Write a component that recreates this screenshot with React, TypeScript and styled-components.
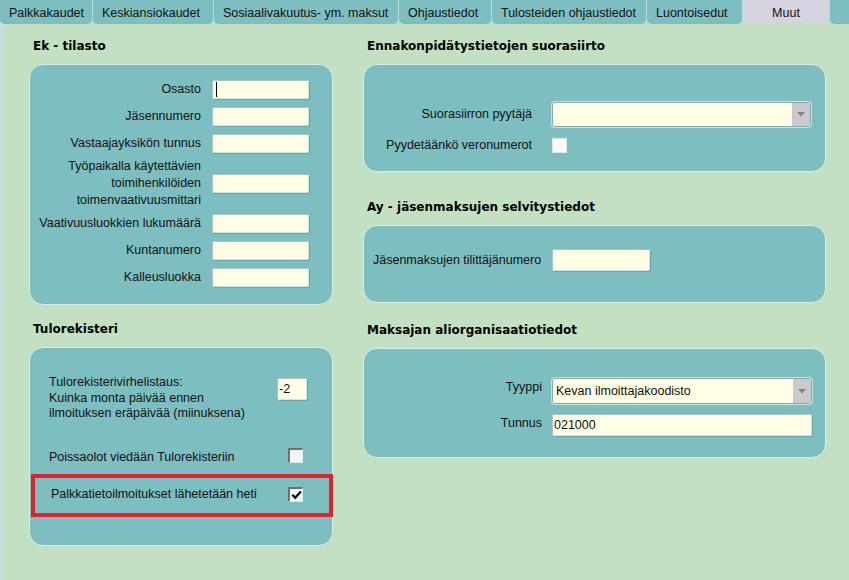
import { Fragment } from "react";
import styled, { createGlobalStyle, css } from "styled-components";

const GlobalStyle = createGlobalStyle`
  html, body {
    margin: 0;
    padding: 0;
  }

  body {
    width: 849px;
    height: 580px;
    overflow: hidden;
    background: #c9dfe2;
    font-family: "Liberation Sans", Arial, sans-serif;
    font-size: 12.5px;
    color: #111;
  }
`;

const Screen = styled.div`
  width: 849px;
  height: 580px;
  display: flex;
  flex-direction: column;
  background: #c9dfe2;
`;

const TabBar = styled.div`
  display: flex;
  gap: 1px;
  height: 24px;
  flex-shrink: 0;
  background: #b6dcd9;
`;

const Tab = styled.div<{ $w: number; $active?: boolean }>`
  box-sizing: border-box;
  width: ${(p) => p.$w}px;
  height: 24px;
  padding: 2px 0 0 9px;
  display: flex;
  align-items: center;
  line-height: 15px;
  white-space: nowrap;
  background: #7dbfc0;
  border-radius: 0 0 5px 5px;

  ${(p) =>
    p.$active &&
    css`
      padding-left: 0;
      justify-content: center;
      background: #d5d3de;
      border-radius: 0;
    `}
`;

const TabFiller = styled.div`
  flex: 1;
  background: #7dbfc0;
  border-radius: 0 0 0 5px;
`;

const Content = styled.div`
  flex: 1;
  margin-left: 3px;
  padding: 15px 0 0 26px;
  background: #c3e0c2;
  border-top-left-radius: 6px;
  display: grid;
  grid-template-columns: 304px 463px;
  column-gap: 30px;
  align-items: start;
`;

const Column = styled.div`
  display: flex;
  flex-direction: column;
`;

const SectionTitle = styled.div<{ $gap?: number }>`
  margin-top: ${(p) => p.$gap ?? 0}px;
  margin-bottom: 10px;
  padding-left: 4px;
  font-family: "DejaVu Sans", Verdana, sans-serif;
  font-weight: bold;
  font-size: 12px;
  line-height: 15px;
  color: #000;
`;

const Panel = styled.div<{ $pad: string }>`
  padding: ${(p) => p.$pad};
  background: #7dbfc0;
  border: 1px solid #d4efe7;
  border-radius: 14px;
`;

const FieldGrid = styled.div<{ $cols: string; $colGap: number; $rowGap: number }>`
  display: grid;
  grid-template-columns: ${(p) => p.$cols};
  column-gap: ${(p) => p.$colGap}px;
  row-gap: ${(p) => p.$rowGap}px;
  align-items: center;
`;

const Label = styled.div<{ $left?: boolean; $top?: boolean }>`
  line-height: 15px;
  white-space: nowrap;
  text-align: ${(p) => (p.$left ? "left" : "right")};

  ${(p) =>
    p.$top &&
    css`
      align-self: start;
      padding-top: 2px;
    `}
`;

const MultiLabel = styled(Label)`
  line-height: 17px;
  margin: -3px 0;
`;

const TextBox = styled.div<{ $w?: number; $h?: number }>`
  box-sizing: border-box;
  width: ${(p) => (p.$w ? `${p.$w}px` : "100%")};
  height: ${(p) => p.$h ?? 19}px;
  padding: 0 1px;
  display: flex;
  align-items: center;
  line-height: 15px;
  background: #fffee4;
  border: 1px solid #cfe6e0;
  border-top-color: #a9c7c2;
  border-left-color: #a9c7c2;
  border-radius: 2px;
  box-shadow: 1px 1px 0 rgba(70, 120, 120, 0.35);
`;

const Caret = styled.span`
  width: 1px;
  height: 15px;
  margin-left: 2px;
  background: #000;
`;

const Select = styled.div<{ $h: number }>`
  box-sizing: border-box;
  width: 100%;
  height: ${(p) => p.$h}px;
  display: flex;
  align-items: center;
  background: #fffee4;
  border: 1px solid #8ea8a7;
  border-radius: 3px;
  overflow: hidden;
  box-shadow: 0 0 0 1px #c7e3dd;
`;

const SelectValue = styled.div`
  flex: 1;
  padding-left: 3px;
  line-height: 15px;
`;

const SelectArrow = styled.div`
  width: 18px;
  align-self: stretch;
  display: flex;
  align-items: center;
  justify-content: center;
  background: #c9cacd;
`;

const CheckBox = styled.div<{ $sunken?: boolean }>`
  box-sizing: border-box;
  width: 15px;
  height: 15px;
  display: flex;
  align-items: center;
  justify-content: center;
  background: #fcfcfc;
  border: 1px solid #dbe8e6;
  justify-self: start;

  ${(p) =>
    p.$sunken &&
    css`
      border-top: 2px solid #6f6f6f;
      border-left: 2px solid #6f6f6f;
      background: #f4f4f4;
    `}
`;

const InfoRow = styled.div<{ $mt?: number; $end?: boolean }>`
  margin-top: ${(p) => p.$mt ?? 0}px;
  display: flex;
  justify-content: space-between;
  align-items: ${(p) => (p.$end ? "flex-end" : "flex-start")};
`;

const InfoText = styled.div`
  line-height: 15.5px;
`;

const RowCheck = styled(CheckBox)<{ $mb: number }>`
  margin: 0 4px ${(p) => p.$mb}px 0;
`;

const SmallBox = styled(TextBox)`
  margin-top: 3px;
`;

const HighlightRow = styled.div`
  box-sizing: border-box;
  height: 43px;
  margin: 8px -26px 0 -18px;
  padding: 0 26px 0 16px;
  display: flex;
  align-items: center;
  justify-content: space-between;
  border: 4px solid #e2222b;
`;

const HighlightCheck = styled(CheckBox)`
  margin-top: -2px;
`;

const CheckMark = () => (
  <svg width="11" height="10" viewBox="0 0 11 10">
    <path d="M1.3 4.8 L4.2 7.8 L9.8 1.4" fill="none" stroke="#111" strokeWidth="2.3" />
  </svg>
);

const DropArrow = () => (
  <svg width="8" height="5" viewBox="0 0 8 5">
    <path d="M0 0 H8 L4 4.5 Z" fill="#7f8485" />
  </svg>
);

const tabs = [
  { label: "Palkkakaudet", w: 92 },
  { label: "Keskiansiokaudet", w: 120 },
  { label: "Sosiaalivakuutus- ym. maksut", w: 184 },
  { label: "Ohjaustiedot", w: 92 },
  { label: "Tulosteiden ohjaustiedot", w: 154 },
  { label: "Luontoisedut", w: 95 },
];

const ekRowsBefore = ["Jäsennumero", "Vastaajayksikön tunnus"];
const ekRowsAfter = ["Vaativuusluokkien lukumäärä", "Kuntanumero", "Kalleusluokka"];

const App = () => {
  return (
    <Screen>
      <GlobalStyle />
      <TabBar>
        {tabs.map((t) => (
          <Tab key={t.label} $w={t.w}>
            {t.label}
          </Tab>
        ))}
        <Tab $w={86} $active>
          Muut
        </Tab>
        <TabFiller />
      </TabBar>

      <Content>
        <Column>
          <SectionTitle>Ek - tilasto</SectionTitle>
          <Panel $pad="15px 23px 17px 5px">
            <FieldGrid $cols="166px 97px" $colGap={11} $rowGap={8}>
              <Label>Osasto</Label>
              <TextBox>
                <Caret />
              </TextBox>
              {ekRowsBefore.map((r) => (
                <Fragment key={r}>
                  <Label>{r}</Label>
                  <TextBox />
                </Fragment>
              ))}
              <MultiLabel>
                Työpaikalla käytettävien
                <br />
                toimihenkilöiden
                <br />
                toimenvaativuusmittari
              </MultiLabel>
              <TextBox />
              {ekRowsAfter.map((r) => (
                <Fragment key={r}>
                  <Label>{r}</Label>
                  <TextBox />
                </Fragment>
              ))}
            </FieldGrid>
          </Panel>

          <SectionTitle $gap={17}>Tulorekisteri</SectionTitle>
          <Panel $pad="27px 25px 28px 19px">
            <InfoRow>
              <InfoText>
                Tulorekisterivirhelistaus:
                <br />
                Kuinka monta päivää ennen
                <br />
                ilmoituksen eräpäivää (miinuksena)
              </InfoText>
              <SmallBox $w={30} $h={22}>
                -2
              </SmallBox>
            </InfoRow>
            <InfoRow $mt={26} $end>
              <InfoText>Poissaolot viedään Tulorekisteriin</InfoText>
              <RowCheck $sunken $mb={3} />
            </InfoRow>
            <HighlightRow>
              <InfoText>Palkkatietoilmoitukset lähetetään heti</InfoText>
              <HighlightCheck $sunken>
                <CheckMark />
              </HighlightCheck>
            </HighlightRow>
          </Panel>
        </Column>

        <Column>
          <SectionTitle>Ennakonpidätystietojen suorasiirto</SectionTitle>
          <Panel $pad="37px 14px 18px 10px">
            <FieldGrid $cols="158px 259px" $colGap={20} $rowGap={11}>
              <Label>Suorasiirron pyytäjä</Label>
              <Select $h={25}>
                <SelectValue />
                <SelectArrow>
                  <DropArrow />
                </SelectArrow>
              </Select>
              <Label>Pyydetäänkö veronumerot</Label>
              <CheckBox />
            </FieldGrid>
          </Panel>

          <SectionTitle $gap={28}>Ay - jäsenmaksujen selvitystiedot</SectionTitle>
          <Panel $pad="23px 0 31px 9px">
            <FieldGrid $cols="169px 98px" $colGap={10} $rowGap={0}>
              <Label $left>Jäsenmaksujen tilittäjänumero</Label>
              <TextBox $h={22} />
            </FieldGrid>
          </Panel>

          <SectionTitle $gap={20}>Maksajan aliorganisaatiotiedot</SectionTitle>
          <Panel $pad="29px 0 21px 9px">
            <FieldGrid $cols="169px 260px" $colGap={10} $rowGap={10}>
              <Label $top>Tyyppi</Label>
              <Select $h={26}>
                <SelectValue>Kevan ilmoittajakoodisto</SelectValue>
                <SelectArrow>
                  <DropArrow />
                </SelectArrow>
              </Select>
              <Label $top>Tunnus</Label>
              <TextBox $h={22}>021000</TextBox>
            </FieldGrid>
          </Panel>
        </Column>
      </Content>
    </Screen>
  );
};

export default App;
